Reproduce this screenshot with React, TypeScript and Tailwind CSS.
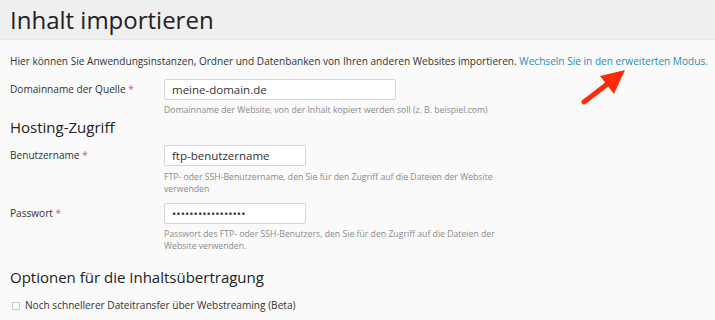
import React from "react";

const Req = () => <span className="text-[#e05a5a]"> *</span>;

export default function App() {
  return (
    <div className="w-[715px] h-[320px] overflow-hidden bg-[#fafafa] text-[#333] relative" style={{ fontFamily: '"Open Sans", sans-serif' }}>
      <div className="h-[40px] bg-[#efefef] border-b border-[#e6e6e6] px-[10px] flex items-center">
        <h1 className="text-[24px] leading-none text-[#222]">Inhalt importieren</h1>
      </div>
      <div className="px-[10px]">
        <p className="text-[10.1px] mt-[14px] leading-[14px] whitespace-nowrap">
          Hier können Sie Anwendungsinstanzen, Ordner und Datenbanken von Ihren anderen Websites importieren.{" "}
          <span className="text-[#2a8ab8]">Wechseln Sie in den erweiterten Modus.</span>
        </p>
        <div className="flex mt-[11px]">
          <div className="w-[154px] text-[10.1px] pt-[3px]">Domainname der Quelle<Req /></div>
          <div>
            <div className="w-[232px] h-[21px] bg-white border border-[#d5d5d5] rounded-[2px] text-[11.5px] px-[7px] leading-[19px]">meine-domain.de</div>
            <div className="text-[8.7px] text-[#8a8a8a] mt-[4px] leading-[12px]">Domainname der Website, von der Inhalt kopiert werden soll (z. B. beispiel.com)</div>
          </div>
        </div>
        <h2 className="text-[15px] mt-[1px] leading-[20px] text-[#222]">Hosting-Zugriff</h2>
        <div className="flex mt-[8px]">
          <div className="w-[154px] text-[10.1px] pt-[3px]">Benutzername<Req /></div>
          <div>
            <div className="w-[142px] h-[21px] bg-white border border-[#d5d5d5] rounded-[2px] text-[11.5px] px-[7px] leading-[19px]">ftp-benutzername</div>
            <div className="w-[340px] text-[8.7px] text-[#8a8a8a] mt-[5px] leading-[12px]">FTP- oder SSH-Benutzername, den Sie für den Zugriff auf die Dateien der Website verwenden</div>
          </div>
        </div>
        <div className="flex mt-[8px]">
          <div className="w-[154px] text-[10.1px] pt-[3px]">Passwort<Req /></div>
          <div>
            <div className="w-[142px] h-[21px] bg-white border border-[#d5d5d5] rounded-[2px] text-[11.5px] px-[7px] leading-[19px]">•••••••••••••••••</div>
            <div className="w-[340px] text-[8.7px] text-[#8a8a8a] mt-[4px] leading-[12px]">Passwort des FTP- oder SSH-Benutzers, den Sie für den Zugriff auf die Dateien der Website verwenden.</div>
          </div>
        </div>
        <h2 className="text-[15px] mt-[15px] leading-[20px] text-[#222]">Optionen für die Inhaltsübertragung</h2>
        <div className="flex items-center mt-[11px] text-[10.1px]">
          <span className="w-[8px] h-[8px] border border-[#c4c4c4] rounded-[1px] bg-white ml-[2px] mr-[5px]" />
          Noch schnellerer Dateitransfer über Webstreaming (Beta)
        </div>
      </div>
      <svg className="absolute left-[578px] top-[64px]" width="52" height="44" viewBox="0 0 52 44">
        <line x1="6" y1="38" x2="32" y2="18" stroke="#ff2a0a" strokeWidth="5" strokeLinecap="round" />
        <polygon points="47,6 22,12 36,30" fill="#ff2a0a" />
      </svg>
    </div>
  );
}
